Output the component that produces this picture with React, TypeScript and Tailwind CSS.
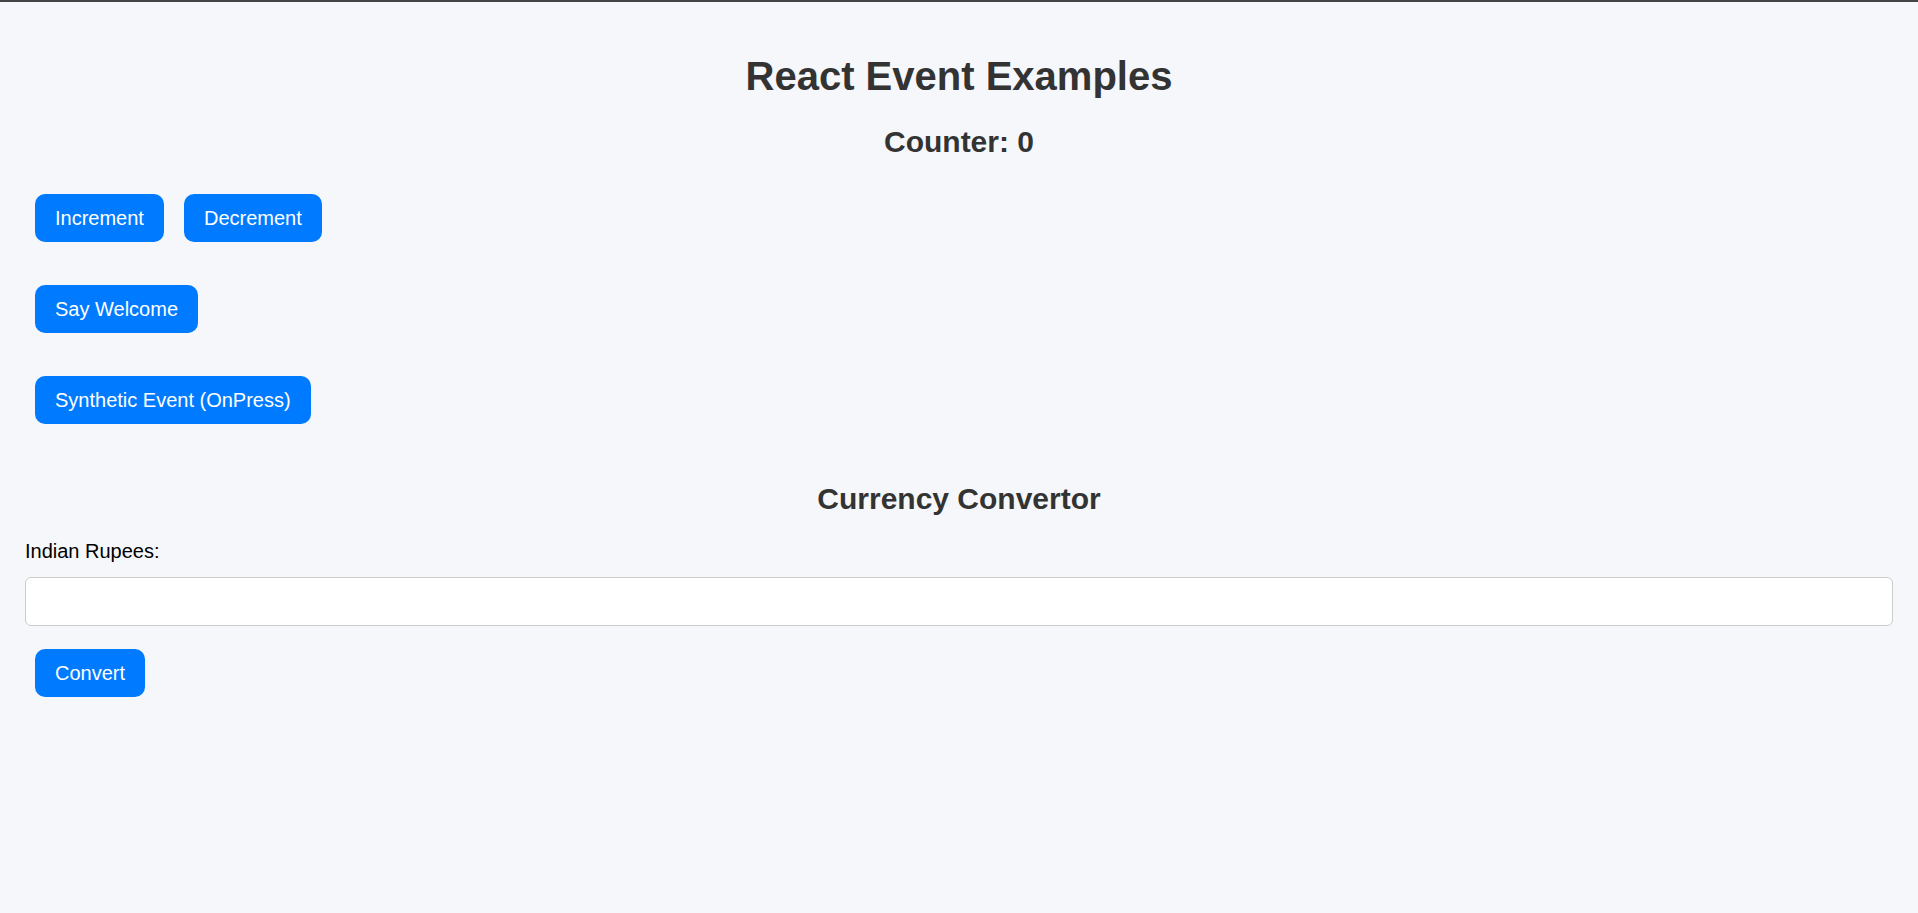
import React, { useState } from "react";

const btn =
  "h-[48px] px-[20px] rounded-[10px] bg-[#007bff] text-white text-[20px] leading-[23px] cursor-pointer";

export default function App() {
  const [count, setCount] = useState(0);
  const [rupees, setRupees] = useState("");

  return (
    <div className="min-h-screen bg-[#f5f7fa] font-['Liberation_Sans',Arial,sans-serif]">
      <div className="h-[2px] bg-[#444]" />
      <div className="px-[25px]">
        <h1 className="mt-[51px] text-center text-[40px] leading-[46px] font-bold text-[#333]">
          React Event Examples
        </h1>
        <h2 className="mt-[26px] text-center text-[30px] leading-[34px] font-bold text-[#333]">
          Counter: {count}
        </h2>

        <div className="mt-[35px] flex gap-[20px] pl-[10px]">
          <button className={btn} onClick={() => setCount(count + 1)}>
            Increment
          </button>
          <button className={btn} onClick={() => setCount(count - 1)}>
            Decrement
          </button>
        </div>

        <div className="mt-[43px] flex pl-[10px]">
          <button className={btn} onClick={() => alert("Welcome")}>
            Say Welcome
          </button>
        </div>

        <div className="mt-[43px] flex pl-[10px]">
          <button className={btn} onClick={() => alert("I was clicked")}>
            Synthetic Event (OnPress)
          </button>
        </div>

        <h2 className="mt-[58px] text-center text-[30px] leading-[34px] font-bold text-[#333]">
          Currency Convertor
        </h2>
        <label className="mt-[24px] block text-[20px] leading-[23px] text-black">Indian Rupees:</label>
        <input
          type="text"
          value={rupees}
          onChange={(e) => setRupees(e.target.value)}
          className="mt-[14px] block h-[49px] w-full rounded-[6px] border border-[#ccc] bg-white px-[12px] text-[20px] focus:outline-none"
        />
        <div className="mt-[23px] flex pl-[10px]">
          <button className={btn}>Convert</button>
        </div>
      </div>
    </div>
  );
}
